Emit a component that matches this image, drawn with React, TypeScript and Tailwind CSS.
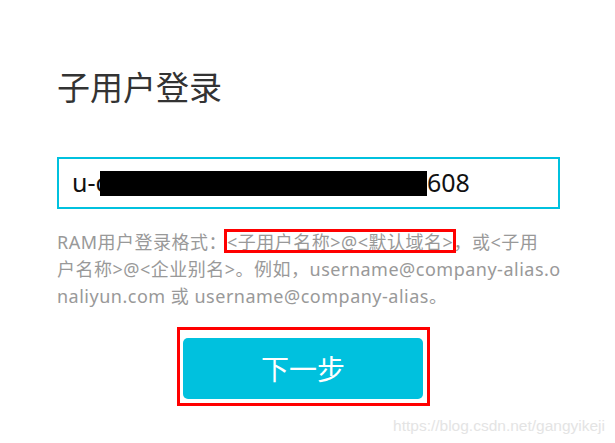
import React from 'react';

const App: React.FC = () => {
  return (
    <div className="relative w-[615px] h-[443px] overflow-hidden bg-white font-['Noto_Sans','Noto_Sans_CJK_SC',sans-serif]">
      <div className="pl-[57px] pr-[55px] pt-[71px]">
        {/* Title */}
        <h1 className="text-[33px] leading-none font-normal text-[#333]">子用户登录</h1>

        {/* Account input */}
        <div className="mt-[53px] flex h-[52px] items-center border-2 border-[#00c1de] pl-[13px] text-[25px] text-[#111]">
          <span className="w-[28px] whitespace-nowrap">u-c</span>
          <div className="relative z-10 h-[25px] w-[327px] bg-black" />
          <span>608</span>
        </div>

        {/* Help text */}
        <p className="mt-[20px] whitespace-nowrap text-[18px] leading-[27px] tracking-[0.5px] text-[#999]">
          RAM用户登录格式：
          <span className="relative">
            &lt;子用户名称&gt;@&lt;默认域名&gt;
            <span className="absolute -left-[3px] -right-[3px] -top-[1px] h-[24px] border-[3px] border-[#ff0000]" />
          </span>
          ，或&lt;子用
          <br />
          户名称&gt;@&lt;企业别名&gt;。例如，username@company-alias.o
          <br />
          naliyun.com 或 username@company-alias。
        </p>

        {/* Next button */}
        <div className="mt-[17px] ml-[120px] w-[253px] border-[3px] border-[#ff0000] pt-[8px] pl-[3px] pr-[4px] pb-[4px]">
          <button className="flex h-[61px] w-[240px] items-center justify-center rounded-[5px] bg-[#00c1de] text-[28px] text-white">
            下一步
          </button>
        </div>
      </div>

      {/* Watermark */}
      <span className="absolute right-[10px] top-[417px] font-['Liberation_Sans',Arial,sans-serif] text-[15.5px] leading-[18px] text-[#e4e4e4]">
        https://blog.csdn.net/gangyikeji
      </span>
    </div>
  );
};

export default App;
